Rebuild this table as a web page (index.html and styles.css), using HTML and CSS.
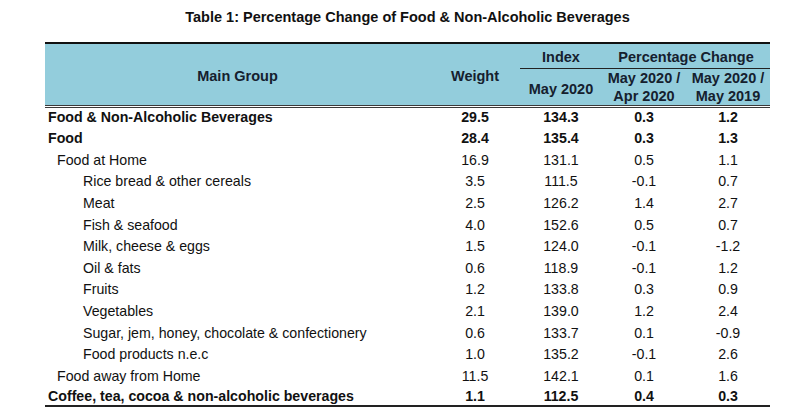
FILE: index.html
```html
<!DOCTYPE html>
<html lang="en">
<head>
<meta charset="utf-8">
<title>Table 1</title>
<link rel="stylesheet" href="styles.css">
</head>
<body>
<div class="wrap">
  <div class="title">Table 1: Percentage Change of Food &amp; Non-Alcoholic Beverages</div>
  <table class="cpi">
    <colgroup>
      <col class="c-name"><col class="c-w"><col class="c-i"><col class="c-p"><col class="c-p">
    </colgroup>
    <thead>
      <tr class="h1">
        <th rowspan="2" class="th-main">Main Group</th>
        <th rowspan="2" class="th-main">Weight</th>
        <th class="th-top">Index</th>
        <th colspan="2" class="th-top">Percentage Change</th>
      </tr>
      <tr class="h2">
        <th class="th-single">May 2020</th>
        <th>May 2020 /<br>Apr 2020</th>
        <th>May 2020 /<br>May 2019</th>
      </tr>
    </thead>
    <tbody>
      <tr class="b first"><td class="l0">Food &amp; Non-Alcoholic Beverages</td><td>29.5</td><td>134.3</td><td>0.3</td><td>1.2</td></tr>
      <tr class="b"><td class="l0">Food</td><td>28.4</td><td>135.4</td><td>0.3</td><td>1.3</td></tr>
      <tr><td class="l1">Food at Home</td><td>16.9</td><td>131.1</td><td>0.5</td><td>1.1</td></tr>
      <tr><td class="l2">Rice bread &amp; other cereals</td><td>3.5</td><td>111.5</td><td>-0.1</td><td>0.7</td></tr>
      <tr><td class="l2">Meat</td><td>2.5</td><td>126.2</td><td>1.4</td><td>2.7</td></tr>
      <tr><td class="l2">Fish &amp; seafood</td><td>4.0</td><td>152.6</td><td>0.5</td><td>0.7</td></tr>
      <tr><td class="l2">Milk, cheese &amp; eggs</td><td>1.5</td><td>124.0</td><td>-0.1</td><td>-1.2</td></tr>
      <tr><td class="l2">Oil &amp; fats</td><td>0.6</td><td>118.9</td><td>-0.1</td><td>1.2</td></tr>
      <tr><td class="l2">Fruits</td><td>1.2</td><td>133.8</td><td>0.3</td><td>0.9</td></tr>
      <tr><td class="l2">Vegetables</td><td>2.1</td><td>139.0</td><td>1.2</td><td>2.4</td></tr>
      <tr><td class="l2">Sugar, jem, honey, chocolate &amp; confectionery</td><td>0.6</td><td>133.7</td><td>0.1</td><td>-0.9</td></tr>
      <tr><td class="l2">Food products n.e.c</td><td>1.0</td><td>135.2</td><td>-0.1</td><td>2.6</td></tr>
      <tr><td class="l1">Food away from Home</td><td>11.5</td><td>142.1</td><td>0.1</td><td>1.6</td></tr>
      <tr class="b last"><td class="l0">Coffee, tea, cocoa &amp; non-alcoholic beverages</td><td>1.1</td><td>112.5</td><td>0.4</td><td>0.3</td></tr>
    </tbody>
  </table>
</div>
</body>
</html>
```
FILE: styles.css
```css
html, body {
  margin: 0;
  padding: 0;
  background: #ffffff;
}
body {
  font-family: "Liberation Sans", Arial, sans-serif;
  font-size: 14.2px;
  color: #111111;
}
.wrap {
  width: 725px;
  margin-left: 45px;
}
.title {
  text-align: center;
  font-weight: bold;
  font-size: 14.5px;
  line-height: 16px;
  padding-top: 9px;
  height: 42px;
  box-sizing: border-box;
  color: #111111;
}
.cpi {
  width: 725px;
  border-collapse: collapse;
  table-layout: fixed;
  border-top: 2px solid #111111;
  border-bottom: 2px solid #222222;
}
.c-name { width: 385px; }
.c-w { width: 90px; }
.c-i { width: 82px; }
.c-p { width: 84px; }

.cpi th {
  background: #93cddc;
  font-weight: bold;
  font-size: 14.5px;
  line-height: 18px;
  color: #15202e;
  text-align: center;
  vertical-align: middle;
  padding: 0;
  border-bottom: 3px double #3a3a3a;
}
.cpi .h1 { height: 25px; }
.cpi .h2 { height: 36px; }
.cpi th.th-top {
  border-bottom: 1px solid #222222;
  padding-top: 2px;
}
.cpi th.th-main {
  padding-top: 3px;
}
.cpi th.th-single {
  padding-top: 4px;
}

.cpi td {
  font-size: 14.2px;
  line-height: 16px;
  padding: 0 0 1px 0;
  vertical-align: bottom;
  text-align: center;
  white-space: nowrap;
}
.cpi tbody tr { height: 21.6px; }
.cpi tbody tr.first { height: 19.6px; }
.cpi tr.b td { font-weight: bold; }
.cpi td.l0 { text-align: left; padding-left: 3px; }
.cpi td.l1 { text-align: left; padding-left: 12px; }
.cpi td.l2 { text-align: left; padding-left: 38px; }
```
